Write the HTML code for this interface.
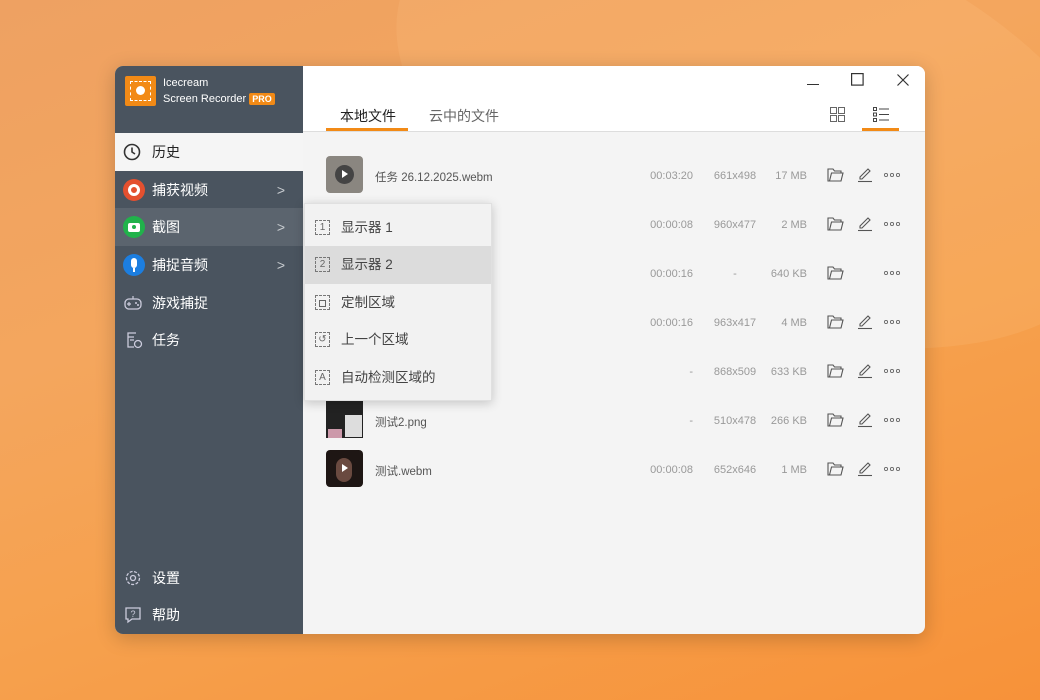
<!DOCTYPE html>
<html style="overflow:hidden;width:1040px;height:700px"><head><meta charset="utf-8">
<style>
*{margin:0;padding:0;box-sizing:border-box}
html,body{width:1040px;height:700px;overflow:hidden}
body{position:relative;font-family:"Liberation Sans","Noto Sans CJK SC",sans-serif;
background:linear-gradient(160deg,#eea162 0%,#f4a65e 35%,#f6a14e 60%,#f79239 100%);}
.bg1{position:absolute;left:380px;top:-80px;width:760px;height:400px;border-radius:50%;background:rgba(255,200,140,.18);transform:rotate(20deg)}
.win{position:absolute;left:115px;top:66px;width:810px;height:568px;border-radius:8px;overflow:hidden;background:#f4f4f4;box-shadow:0 4px 20px rgba(0,0,0,.2)}
.side{position:absolute;left:0;top:0;width:188px;height:568px;background:#4a545f}
.abs{position:absolute}
.head{position:absolute;left:188px;top:0;width:622px;height:66px;background:#fff;border-bottom:1px solid #ddd}
.si{position:absolute;left:0;width:188px;height:38px;color:#fff;font-size:14px;line-height:38px;padding-left:37px}
.ic{position:absolute;left:8px;top:8px;width:22px;height:22px;border-radius:50%}
.arr{position:absolute;right:18px;top:0;color:#c8ccd0;font-size:14px}
.row{position:absolute;left:188px;width:622px;height:40px;font-size:11px;color:#999}
.th{position:absolute;left:23px;top:0;width:37px;height:37px;border-radius:4px;overflow:hidden}
.nm{position:absolute;left:72px;top:13px;color:#555;font-size:11.5px}
.du{position:absolute;right:232px;top:14px}
.rs{position:absolute;left:400px;width:64px;text-align:center;top:14px}
.sz{position:absolute;right:118px;top:14px}
.menu{position:absolute;left:304px;top:203px;width:188px;height:198px;background:#f2f2f2;box-shadow:0 2px 10px rgba(0,0,0,.2);border:1px solid #e0e0e0}
.mi{position:absolute;left:0;width:186px;height:37.5px;font-size:13.5px;color:#444;line-height:37px;padding-left:36px}
.mb{position:absolute;left:10px;top:11px;width:15px;height:15px;border:1px dashed #777;font-size:10px;line-height:13px;text-align:center;color:#666;padding:0}
</style></head><body>
<div class="bg1"></div>
<div class="win">
 <div class="side">
  <div class="abs" style="left:10px;top:10px;width:31px;height:30px;background:#f28a16;border-radius:2px">
   <div class="abs" style="left:5px;top:5px;width:21px;height:20px;border:1.5px dashed #fff"></div>
   <div class="abs" style="left:11px;top:10px;width:9px;height:9px;border-radius:50%;background:#fff"></div>
  </div>
  <div class="abs" style="left:48px;top:11px;color:#fff;font-size:11px">Icecream</div>
  <div class="abs" style="left:48px;top:27px;color:#fff;font-size:11px">Screen Recorder <span style="background:#f28a16;border-radius:2px;padding:1px 3px;font-size:9px;font-weight:bold">PRO</span></div>
  <div class="si" style="top:67px;background:#f5f5f5;color:#222"><svg class="abs" style="left:8px;top:10px" width="18" height="18" viewBox="0 0 18 18"><circle cx="9" cy="9" r="7.5" fill="none" stroke="#333" stroke-width="1.6"/><path d="M9 4.5V9l3 2" fill="none" stroke="#333" stroke-width="1.6"/></svg>历史</div>
  <div class="si" style="top:105px"><div class="ic" style="background:#e4502f"><div class="abs" style="left:5px;top:5px;width:12px;height:12px;border-radius:50%;border:3px solid #fff"></div></div>捕获视频<span class="arr">&gt;</span></div>
  <div class="si" style="top:142px;background:#5b646e"><div class="ic" style="background:#21b24b"><div class="abs" style="left:5px;top:7px;width:12px;height:9px;border-radius:2px;background:#fff"></div><div class="abs" style="left:9px;top:9px;width:4px;height:4px;border-radius:50%;background:#21b24b"></div></div>截图<span class="arr">&gt;</span></div>
  <div class="si" style="top:180px"><div class="ic" style="background:#1c7ee0"><div class="abs" style="left:8px;top:4px;width:6px;height:10px;border-radius:3px;background:#fff"></div><div class="abs" style="left:10px;top:14px;width:2px;height:4px;background:#fff"></div></div>捕捉音频<span class="arr">&gt;</span></div>
  <div class="si" style="top:218px"><svg class="abs" style="left:9px;top:11px" width="18" height="16" viewBox="0 0 18 16"><rect x="1" y="4" width="16" height="10" rx="4" fill="none" stroke="#ccd" stroke-width="1.3"/><path d="M5 7v4M3 9h4M9 1v3" stroke="#ccd" stroke-width="1.2"/><circle cx="12" cy="8" r="1" fill="#ccd"/><circle cx="14" cy="10" r="1" fill="#ccd"/></svg>游戏捕捉</div>
  <div class="si" style="top:255px"><svg class="abs" style="left:10px;top:10px" width="18" height="18" viewBox="0 0 18 18"><path d="M11 2H3v14h6M3 6h6M5 9h4" fill="none" stroke="#ccd" stroke-width="1.3"/><circle cx="13" cy="13" r="3.5" fill="none" stroke="#ccd" stroke-width="1.3"/></svg>任务</div>
  <div class="si" style="top:493px"><svg class="abs" style="left:9px;top:10px" width="18" height="18" viewBox="0 0 18 18"><circle cx="9" cy="9" r="6.5" fill="none" stroke="#ccd" stroke-width="1.3" stroke-dasharray="3 1.5"/><circle cx="9" cy="9" r="2.5" fill="none" stroke="#ccd" stroke-width="1.3"/></svg>设置</div>
  <div class="si" style="top:530px"><svg class="abs" style="left:9px;top:10px" width="18" height="18" viewBox="0 0 18 18"><path d="M2 2h14v11H8l-4 3v-3H2z" fill="none" stroke="#ccd" stroke-width="1.3"/><text x="6.5" y="11" font-size="9" fill="#ccd" font-family="Liberation Sans">?</text></svg>帮助</div>
 </div>
 <div class="head">
  <div class="abs" style="left:504px;top:18px;width:12px;height:1px;background:#333"></div>
  <svg class="abs" style="left:548px;top:7px" width="13" height="13"><rect x=".6" y=".6" width="11.5" height="11.5" fill="none" stroke="#333" stroke-width="1.2"/></svg>
  <svg class="abs" style="left:594px;top:8px" width="12" height="12"><path d="M.5.5l11 11M11.5.5l-11 11" stroke="#333" stroke-width="1.2"/></svg>
  <div class="abs" style="left:37px;top:40px;font-size:14px;color:#222">本地文件</div>
  <div class="abs" style="left:23px;top:62px;width:82px;height:3px;background:#f28a16"></div>
  <div class="abs" style="left:126px;top:40px;font-size:14px;color:#666">云中的文件</div>
  <svg class="abs" style="left:527px;top:41px" width="15" height="15" viewBox="0 0 15 15"><g fill="none" stroke="#666"><rect x=".5" y=".5" width="6" height="6"/><rect x="8.5" y=".5" width="6" height="6"/><rect x=".5" y="8.5" width="6" height="6"/><rect x="8.5" y="8.5" width="6" height="6"/></g></svg>
  <svg class="abs" style="left:570px;top:41px" width="16" height="15" viewBox="0 0 16 15"><g fill="none" stroke="#444"><rect x=".5" y=".5" width="3" height="3"/><rect x=".5" y="6" width="3" height="3"/><rect x=".5" y="11.5" width="3" height="3"/><path d="M6 2h10M6 7.5h10M6 13h10"/></g></svg>
  <div class="abs" style="left:559px;top:62px;width:37px;height:3px;background:#f28a16"></div>
 </div>
</div>
<div style="position:absolute;left:115px;top:66px;width:810px;height:568px">
 <div class="row" style="top:90px"><div class="th" style="background:#8a8680"><div class="abs" style="left:9px;top:9px;width:19px;height:19px;border-radius:50%;background:#444"></div><div class="abs" style="left:16px;top:14px;border-left:6px solid #fff;border-top:4.5px solid transparent;border-bottom:4.5px solid transparent"></div></div><div class="nm">任务 26.12.2025.webm</div><div class="du">00:03:20</div><div class="rs">661x498</div><div class="sz">17 MB</div></div>
 <div class="row" style="top:139px"><div class="du">00:00:08</div><div class="rs">960x477</div><div class="sz">2 MB</div></div>
 <div class="row" style="top:188px"><div class="du">00:00:16</div><div class="rs">-</div><div class="sz">640 KB</div></div>
 <div class="row" style="top:237px"><div class="du">00:00:16</div><div class="rs">963x417</div><div class="sz">4 MB</div></div>
 <div class="row" style="top:286px"><div class="du">-</div><div class="rs">868x509</div><div class="sz">633 KB</div></div>
 <div class="row" style="top:335px"><div class="th" style="background:#222;border-radius:0"><div class="abs" style="left:19px;top:14px;width:17px;height:22px;background:#ddd"></div><div class="abs" style="left:2px;top:28px;width:14px;height:9px;background:#c9a"></div></div><div class="nm">测试2.png</div><div class="du">-</div><div class="rs">510x478</div><div class="sz">266 KB</div></div>
 <div class="row" style="top:384px"><div class="th" style="background:#1e1614"><div class="abs" style="left:10px;top:8px;width:16px;height:24px;border-radius:8px;background:#6a4a40"></div><div class="abs" style="left:16px;top:14px;border-left:6px solid #fff;border-top:4.5px solid transparent;border-bottom:4.5px solid transparent"></div></div><div class="nm">测试.webm</div><div class="du">00:00:08</div><div class="rs">652x646</div><div class="sz">1 MB</div></div>
</div>
<svg style="position:absolute;left:0;top:0" width="1040" height="700">
 <defs>
  <g id="f"><path d="M0 1h5l1.5 2H13v2H3.5L1.5 13H0zM3.5 5H15l-2 8H1.5" fill="none" stroke="#555" stroke-width="1.1"/></g>
  <g id="p"><path d="M3 10L11 2l2 2-8 8H3z" fill="none" stroke="#555" stroke-width="1.1"/><path d="M1 14.5h14" stroke="#555" stroke-width="1.1"/></g>
  <g id="d"><circle cx="2" cy="0" r="1.6" fill="none" stroke="#666" stroke-width=".9"/><circle cx="8" cy="0" r="1.6" fill="none" stroke="#666" stroke-width=".9"/><circle cx="14" cy="0" r="1.6" fill="none" stroke="#666" stroke-width=".9"/></g>
 </defs>
 <use href="#f" x="828" y="168"/><use href="#p" x="857" y="167"/><use href="#d" x="884" y="175"/>
 <use href="#f" x="828" y="217"/><use href="#p" x="857" y="216"/><use href="#d" x="884" y="224"/>
 <use href="#f" x="828" y="266"/><use href="#d" x="884" y="273"/>
 <use href="#f" x="828" y="315"/><use href="#p" x="857" y="314"/><use href="#d" x="884" y="322"/>
 <use href="#f" x="828" y="364"/><use href="#p" x="857" y="363"/><use href="#d" x="884" y="371"/>
 <use href="#f" x="828" y="413"/><use href="#p" x="857" y="412"/><use href="#d" x="884" y="420"/>
 <use href="#f" x="828" y="462"/><use href="#p" x="857" y="461"/><use href="#d" x="884" y="469"/>
</svg>
<div class="menu">
 <div class="mi" style="top:5px"><span class="mb">1</span>显示器 1</div>
 <div class="mi" style="top:42px;background:#dcdcdc"><span class="mb">2</span>显示器 2</div>
 <div class="mi" style="top:80px"><span class="mb"><span style="display:inline-block;width:7px;height:7px;border:1px solid #666;margin-top:4px"></span></span>定制区域</div>
 <div class="mi" style="top:117px"><span class="mb">↺</span>上一个区域</div>
 <div class="mi" style="top:155px"><span class="mb">A</span>自动检测区域的</div>
</div>
</body></html>
